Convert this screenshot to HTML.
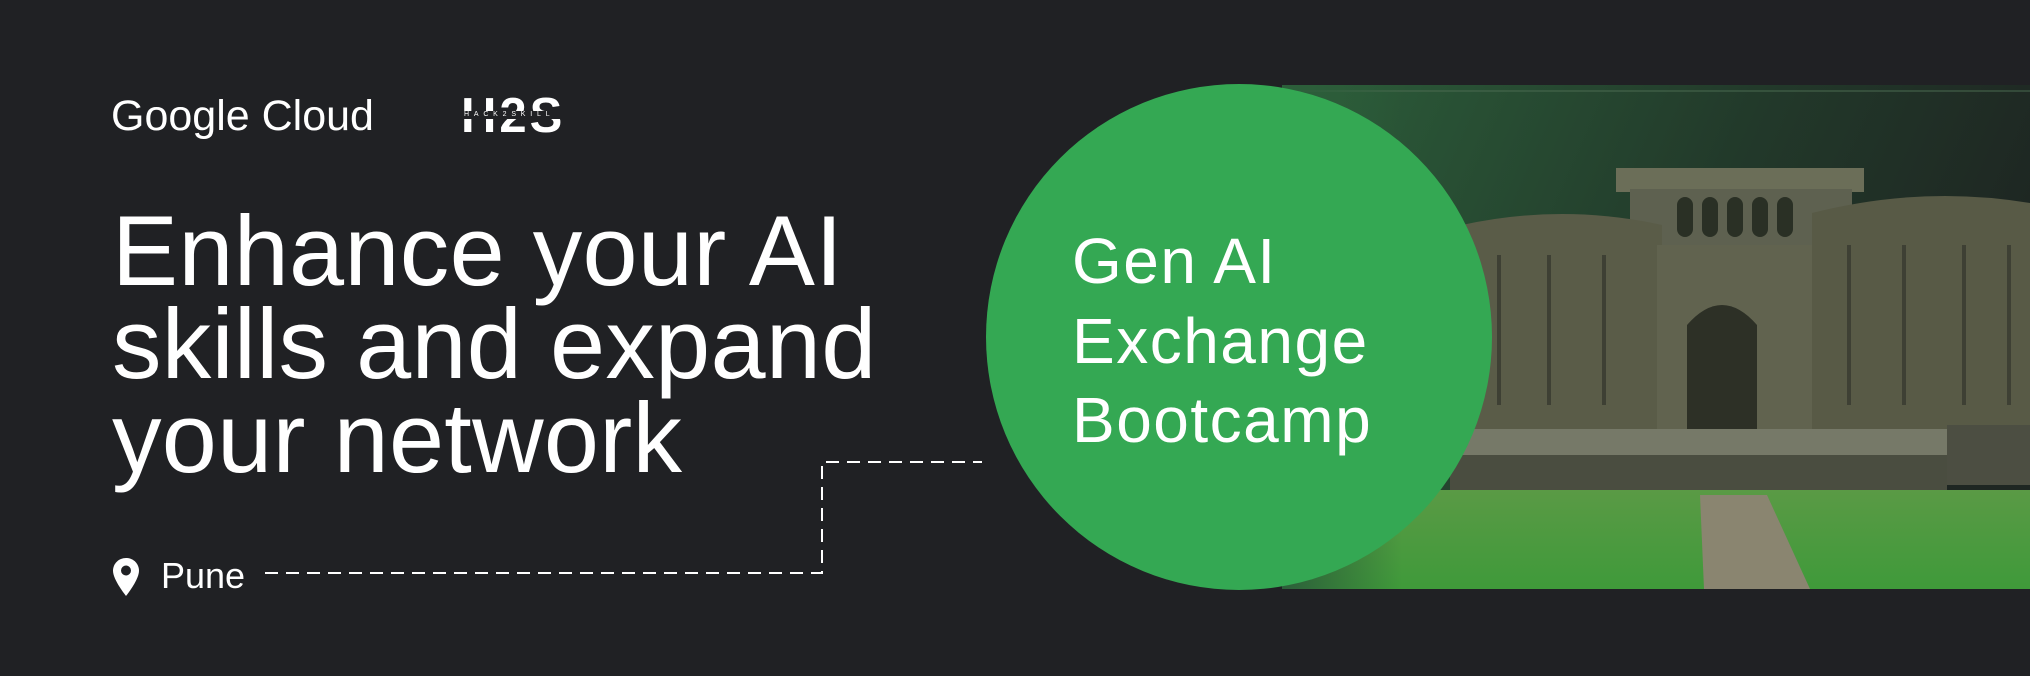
<!DOCTYPE html>
<html><head><meta charset="utf-8"><style>
html,body{margin:0;padding:0;}
body{width:2030px;height:676px;background:#202124;position:relative;overflow:hidden;font-family:"Liberation Sans",sans-serif;color:#fff;}
.abs{position:absolute;}
.gc{left:111px;top:92px;font-size:43px;letter-spacing:0px;white-space:nowrap;}
.h{left:112px;font-size:99px;letter-spacing:0.3px;white-space:nowrap;line-height:1;}
.gen{left:1072px;font-size:64px;letter-spacing:1.5px;white-space:nowrap;line-height:1;}
</style></head><body>
<div class="abs gc">Google Cloud</div>
<div class="abs" style="left:461px;top:92px;font-size:49px;font-weight:bold;letter-spacing:3px;line-height:1;">H2S</div>
<div class="abs" style="left:462px;top:111px;width:106px;height:8px;background:#202124;"></div>
<div class="abs" style="left:464px;top:111px;font-size:7px;letter-spacing:4.8px;line-height:8px;">HACK2SKILL</div>

<div class="abs h" style="top:201px;">Enhance your AI</div>
<div class="abs h" style="top:294px;">skills and expand</div>
<div class="abs h" style="top:388px;">your network</div>

<svg class="abs" style="left:112px;top:557px" width="28" height="40" viewBox="0 0 28 40"><path d="M14 1C6.8 1 1 6.6 1 13.8 1 23 14 39 14 39S27 23 27 13.8C27 6.6 21.2 1 14 1Z" fill="#fff"/><circle cx="14" cy="13.5" r="5" fill="#202124"/></svg>
<div class="abs" style="left:161px;top:558px;font-size:36px;line-height:1;">Pune</div>

<svg class="abs" style="left:0;top:0" width="1000" height="676"><path d="M265 573H822V462H982" fill="none" stroke="#fff" stroke-width="2" stroke-dasharray="13 8"/></svg>

<svg class="abs" style="left:1282px;top:85px" width="748" height="504" viewBox="0 0 748 504">
<defs>
<linearGradient id="sky" x1="0" y1="0" x2="1" y2="0.3"><stop offset="0" stop-color="#2c5e3a"/><stop offset="0.6" stop-color="#22392a"/><stop offset="1" stop-color="#1e2622"/></linearGradient>
<linearGradient id="grass" x1="0" y1="0" x2="0" y2="1"><stop offset="0" stop-color="#5a9a45"/><stop offset="1" stop-color="#3f9a3a"/></linearGradient>
</defs>
<rect width="748" height="504" fill="url(#sky)"/>
<line x1="0" y1="6" x2="748" y2="6" stroke="#4a6a50" stroke-width="1"/>
<rect x="334" y="83" width="248" height="24" fill="#6b6e58"/>
<rect x="348" y="104" width="222" height="80" fill="#5e6150"/>
<g fill="#2a3025"><rect x="395" y="112" width="16" height="40" rx="8"/><rect x="420" y="112" width="16" height="40" rx="8"/><rect x="445" y="112" width="16" height="40" rx="8"/><rect x="470" y="112" width="16" height="40" rx="8"/><rect x="495" y="112" width="16" height="40" rx="8"/></g>
<path d="M180 347V140Q280 118 380 140V347Z" fill="#5a5c48"/>
<rect x="375" y="160" width="160" height="190" fill="#61634f"/>
<path d="M530 347V128Q640 100 748 118V347Z" fill="#585a46"/>
<path d="M405 350V240Q440 200 475 240V350Z" fill="#2d3026"/>
<g fill="#3e4034"><rect x="215" y="170" width="4" height="150"/><rect x="265" y="170" width="4" height="150"/><rect x="320" y="170" width="4" height="150"/><rect x="565" y="160" width="4" height="160"/><rect x="620" y="160" width="4" height="160"/><rect x="680" y="160" width="4" height="160"/><rect x="725" y="160" width="4" height="160"/></g>
<path d="M174 344H673V400H174Z" fill="#767968"/>
<path d="M168 370H665V405H168Z" fill="#4a4d40"/>
<rect x="665" y="340" width="83" height="60" fill="#4c4e42"/>
<rect x="0" y="405" width="748" height="99" fill="url(#grass)"/>
<path d="M418 410H485L528 504H422Z" fill="#8a8570"/>
</svg>
<div class="abs" style="left:1282px;top:85px;width:120px;height:504px;background:linear-gradient(90deg,#2c5e3a,rgba(44,94,58,0));"></div>

<div class="abs" style="left:986px;top:84px;width:506px;height:506px;border-radius:50%;background:#34a853;"></div>
<div class="abs gen" style="top:229px;">Gen AI</div>
<div class="abs gen" style="top:309px;">Exchange</div>
<div class="abs gen" style="top:388px;">Bootcamp</div>
</body></html>
